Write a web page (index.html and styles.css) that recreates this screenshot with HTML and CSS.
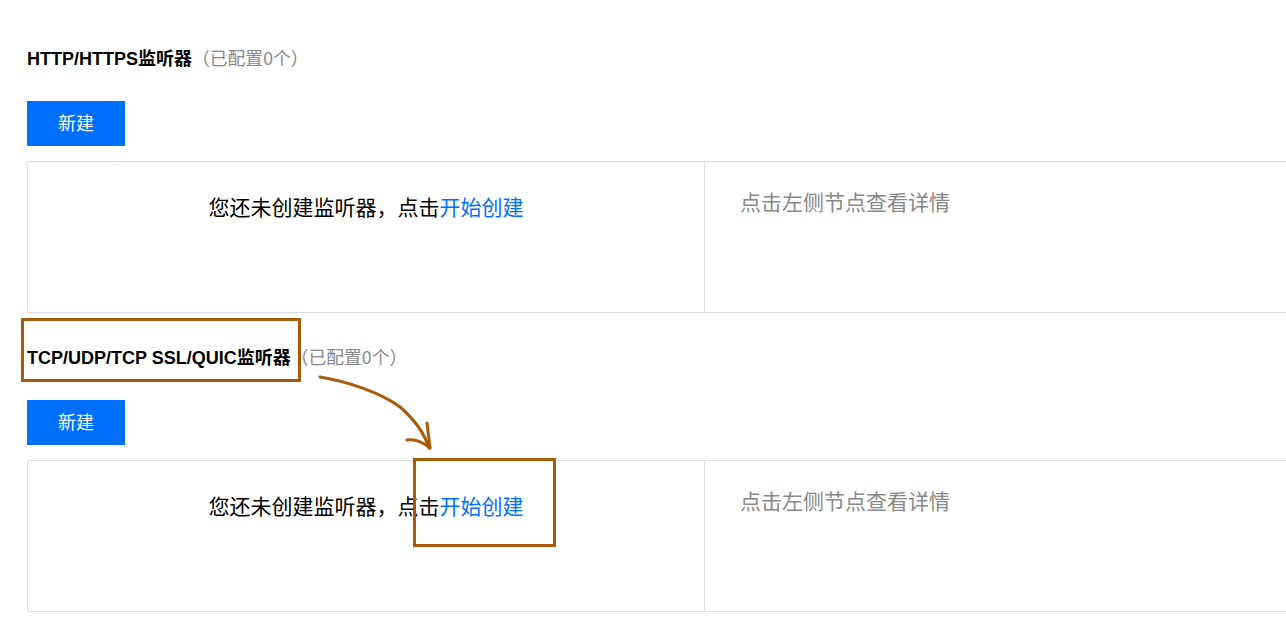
FILE: index.html
```html
<!DOCTYPE html>
<html lang="zh-CN">
<head>
<meta charset="utf-8">
<title>监听器</title>
<link rel="stylesheet" href="styles.css">
</head>
<body>
<main class="page">
  <section class="sec">
    <h3 class="title"><span class="name">HTTP/HTTPS监听器</span><span class="count">（已配置0个）</span></h3>
    <button class="btn" type="button">新建</button>
    <div class="panel">
      <div class="cell-left"><span>您还未创建监听器，点击</span><a class="link" href="#">开始创建</a></div>
      <div class="cell-right">点击左侧节点查看详情</div>
    </div>
  </section>

  <section class="sec">
    <h3 class="title"><span class="name">TCP/UDP/TCP SSL/QUIC监听器</span><span class="count">（已配置0个）</span></h3>
    <button class="btn" type="button">新建</button>
    <div class="panel">
      <div class="cell-left"><span>您还未创建监听器，点击</span><a class="link" href="#">开始创建</a></div>
      <div class="cell-right">点击左侧节点查看详情</div>
    </div>
  </section>
</main>

<svg class="annot" width="1286" height="633" viewBox="0 0 1286 633" aria-hidden="true">
  <g fill="none" stroke="#a65b0b" stroke-width="3" stroke-linecap="round" stroke-linejoin="round">
    <rect x="22.5" y="319.5" width="277" height="61" stroke-linecap="butt" stroke-linejoin="miter"/>
    <rect x="414.5" y="459.5" width="140" height="86" stroke-linecap="butt" stroke-linejoin="miter"/>
    <path d="M320 377 C345 381 380 392 400 407 C415 420 424 432 429 448"/>
    <path d="M427 423 L430 448"/>
    <path d="M407 440 Q418 438 430 448"/>
  </g>
</svg>
</body>
</html>
```

FILE: styles.css
```css
html, body {
  margin: 0;
  padding: 0;
  background: #fff;
  overflow: hidden;
}

body {
  position: relative;
  width: 1286px;
  height: 633px;
  font-family: "Liberation Sans", "Noto Sans CJK SC", sans-serif;
  color: #000;
}

.page {
  padding: 14px 0 0 27px;
}

.sec {
  padding-top: 31px;
}

.title {
  margin: 0;
  height: 24px;
  line-height: 24px;
  font-size: 18px;
  font-weight: normal;
  white-space: nowrap;
}

.title .name {
  font-weight: bold;
  color: #000;
}

.title .count {
  font-size: 17.8px;
  color: #888;
  font-family: "Noto Sans CJK SC", sans-serif;
}

.btn {
  display: block;
  margin-top: 32px;
  width: 98px;
  height: 45px;
  padding: 0 0 2px;
  border: none;
  background: #006eff;
  color: #fff;
  font-family: "Noto Sans CJK SC", sans-serif;
  font-size: 18px;
  line-height: 43px;
  cursor: pointer;
}

.panel {
  display: flex;
  margin-top: 15px;
  height: 150px;
  border: 1px solid #dcdcdc;
  border-right: none;
}

.cell-left {
  width: 676px;
  flex: none;
  border-right: 1px solid #dcdcdc;
  padding-top: 29px;
  text-align: center;
  font-family: "Noto Sans CJK SC", sans-serif;
  font-size: 21px;
  line-height: 30px;
  color: #000;
}

.link {
  color: #006eff;
  text-decoration: none;
}

.cell-right {
  flex: 1;
  padding: 24px 0 0 35px;
  font-family: "Noto Sans CJK SC", sans-serif;
  font-size: 21px;
  line-height: 30px;
  color: #888;
}

.annot {
  position: absolute;
  left: 0;
  top: 0;
  pointer-events: none;
}
```
